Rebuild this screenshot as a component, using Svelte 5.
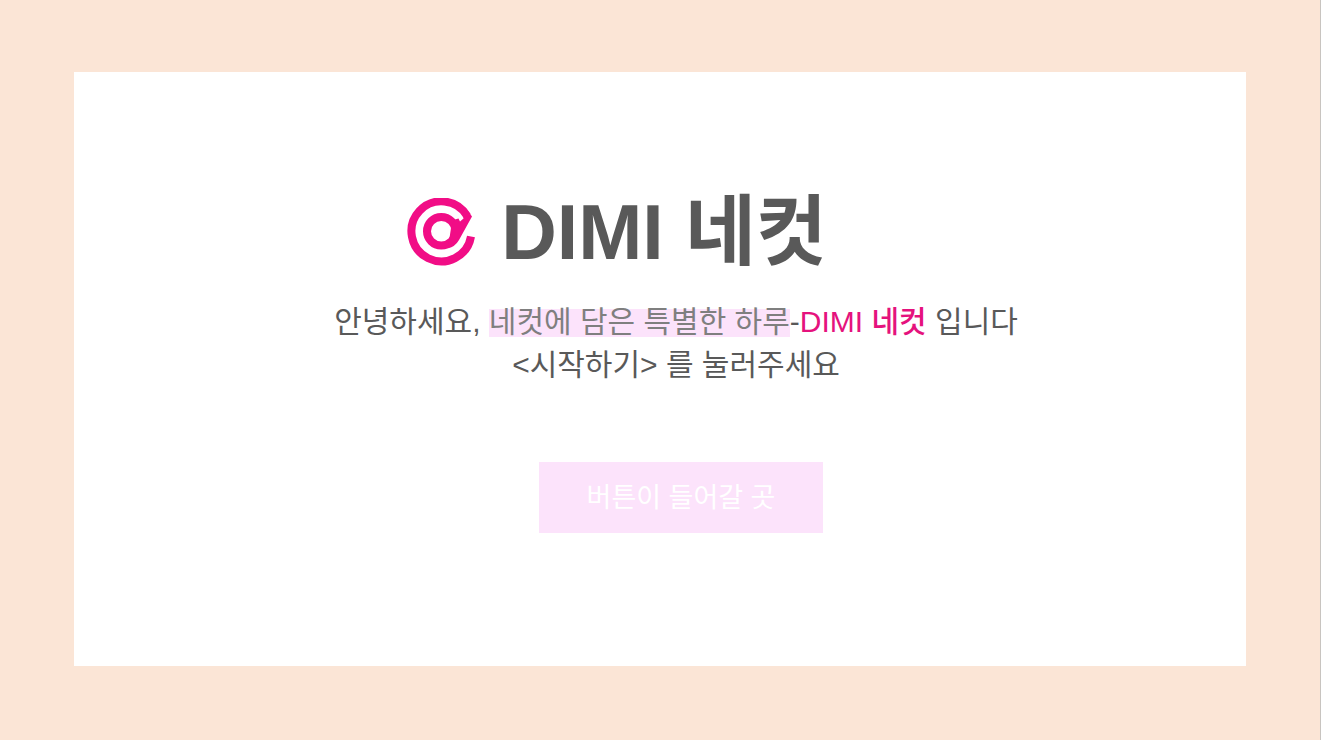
<script>
  const brand = 'DIMI 네컷';
</script>

<main>
  <section class="card">
    <header>
      <svg class="logo" viewBox="0 0 68 68" aria-hidden="true">
        <path d="M60.2 18A30 30 0 1 0 64 38.5" />
        <circle cx="34.3" cy="33.3" r="14.3" />
        <path class="tail" d="M56 14L61.5 13.5L65 18.5L52 42Q48 49 41 50L44 30L48 21.5L51.5 20.5L53 23.5L56.5 20.5Z" />
      </svg>
      <h1>{brand}</h1>
    </header>
    <p>
      안녕하세요, <mark>네컷에 담은 특별한 하루</mark>-<strong>{brand}</strong> 입니다<br />
      &lt;시작하기&gt; 를 눌러주세요
    </p>
    <button type="button">버튼이 들어갈 곳</button>
  </section>
</main>

<style>
  :global(body) {
    margin: 0;
  }
  main {
    box-sizing: border-box;
    min-height: 100vh;
    padding: 72px 74px 74px;
    display: flex;
    background: #fbe5d6;
    border-right: 1px solid #c8c4c0;
    font-family: "Liberation Sans", "Noto Sans CJK KR", sans-serif;
    color: #595959;
  }
  .card {
    flex: 1;
    display: flex;
    flex-direction: column;
    align-items: center;
    padding-top: 104px;
    background: #fff;
  }
  header {
    display: flex;
    align-items: center;
    gap: 26px;
    margin-right: 86px;
  }
  .logo {
    width: 68px;
    height: 68px;
    fill: none;
    stroke: #f10d86;
    stroke-width: 8;
  }
  .tail {
    fill: #f10d86;
    stroke: none;
  }
  h1 {
    margin: 0;
    font-size: 77px;
    line-height: 112px;
    font-weight: 700;
  }
  p {
    margin: 12px 0 0 32px;
    font-size: 30px;
    line-height: 43px;
    text-align: center;
  }
  mark {
    background: linear-gradient(#fce3fb, #fce3fb) 0 4px / 100% 28px no-repeat;
    color: #7f7f7f;
  }
  strong {
    color: #e5127d;
    font-weight: 500;
  }
  button {
    width: 284px;
    height: 71px;
    margin: 76px 0 0 42px;
    padding: 0 0 4px;
    border: 0;
    background: #fce3fb;
    color: #fff;
    font-family: inherit;
    font-size: 27px;
  }
</style>
